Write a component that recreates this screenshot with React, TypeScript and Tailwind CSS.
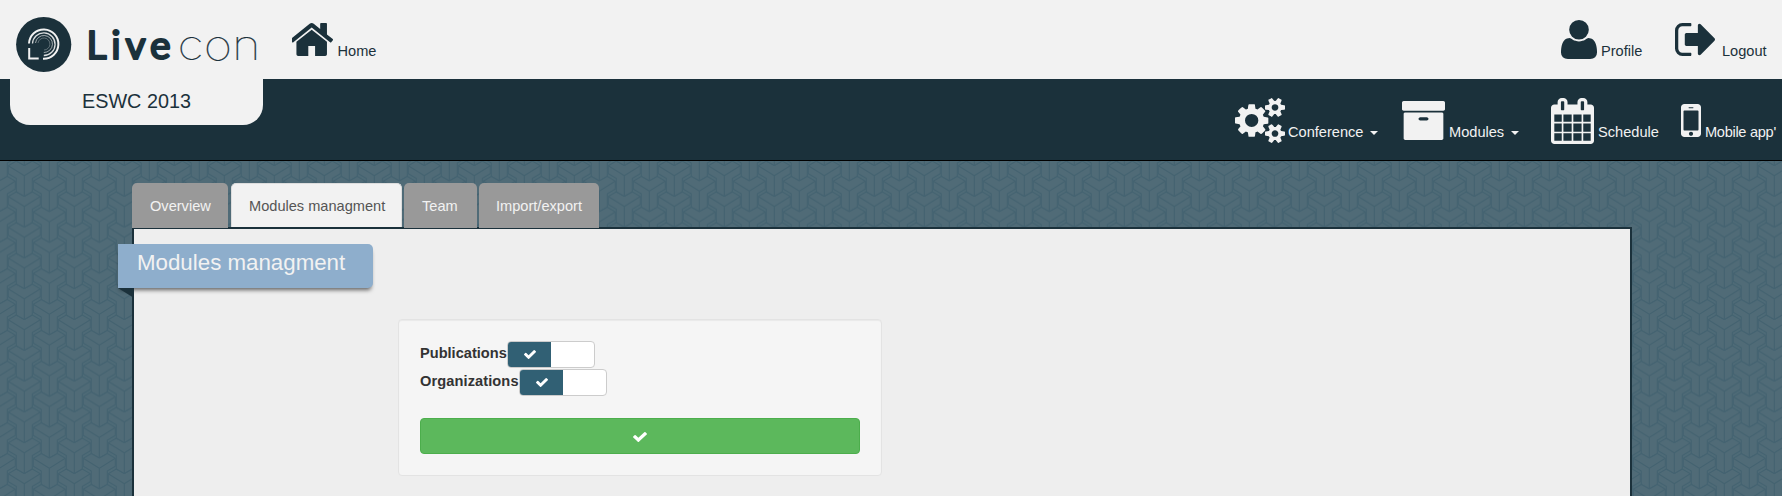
import React from "react";

type IconProps = { box: string; d: string; className: string };

const Icon = ({ box, d, className }: IconProps) => (
  <svg viewBox={box} preserveAspectRatio="none" className={`block shrink-0 fill-current ${className}`}>
    <path d={d} />
  </svg>
);

const HOME =
  "M1408 992v480q0 26-19 45t-45 19h-384v-384h-256v384h-384q-26 0-45-19t-19-45v-480q0-1 .5-3t.5-3l575-474 575 474q1 2 1 6zm223-69l-62 74q-8 9-21 11h-3q-13 0-21-7l-692-577-692 577q-12 8-24 7-13-2-21-11l-62-74q-8-10-7-23.5t11-21.5l719-599q32-26 76-26t76 26l244 204v-195q0-14 9-23t23-9h192q14 0 23 9t9 23v408l219 182q10 8 11 21.5t-7 23.5z";
const USER =
  "M1600 1405q0 120-73 189.5t-194 69.5h-874q-121 0-194-69.5t-73-189.5q0-53 3.5-103.5t14-109 26.5-108.5 43-97.5 62-81 85.5-53.5 111.5-20q9 0 42 21.5t74.5 48 108 48 133.5 21.5 133.5-21.5 108-48 74.5-48 42-21.5q61 0 111.5 20t85.5 53.5 62 81 43 97.5 26.5 108.5 14 109 3.5 103.5zm-320-893q0 159-112.5 271.5t-271.5 112.5-271.5-112.5-112.5-271.5 112.5-271.5 271.5-112.5 271.5 112.5 112.5 271.5z";
const SIGN_OUT =
  "M704 1440q0 4 1 20t.5 26.5-3 23.5-10 19.5-20.5 6.5h-320q-119 0-203.5-84.5t-84.5-203.5v-704q0-119 84.5-203.5t203.5-84.5h320q13 0 22.5 9.5t9.5 22.5q0 4 1 20t.5 26.5-3 23.5-10 19.5-20.5 6.5h-320q-66 0-113 47t-47 113v704q0 66 47 113t113 47h312l11.5 1 11.5 3 8 5.5 7 9 2 13.5zm928-544q0 26-19 45l-544 544q-19 19-45 19t-45-19-19-45v-288h-448q-26 0-45-19t-19-45v-384q0-26 19-45t45-19h448v-288q0-26 19-45t45-19 45 19l544 544q19 19 19 45z";
const SMALL_COG =
  "v140q0 16-149 31-12 27-30 52 51 113 51 138 0 4-4 7-122 71-124 71-8 0-46-47t-52-68q-20 2-30 2t-30-2q-14 21-52 68t-46 47q-2 0-124-71-4-3-4-7 0-25 51-138-18-25-30-52-149-15-149-31v-140q0-16 149-31 13-29 30-52-51-113-51-138 0-4 4-7 4-2 35-20t59-34 30-16q8 0 46 46.5t52 67.5q20-2 30-2t30 2q51-71 92-112l6-2q4 0 124 70 4 3 4 7 0 25-51 138 17 23 30 52 149 15 149 31z";
const COGS =
  "M832 896q0-106-75-181t-181-75-181 75-75 181 75 181 181 75 181-75 75-181zm768 512q0-52-38-90t-90-38-90 38-38 90q0 53 37.5 90.5t90.5 37.5 90.5-37.5 37.5-90.5zm0-1024q0-52-38-90t-90-38-90 38-38 90q0 53 37.5 90.5t90.5 37.5 90.5-37.5 37.5-90.5zm-384 421v185q0 10-7 19.5t-16 10.5l-155 24q-11 35-32 76 34 48 90 115 7 11 7 20 0 12-7 19-23 30-82.5 89.5t-78.5 59.5q-11 0-21-7l-115-90q-37 19-77 31-11 108-23 155-7 24-30 24h-186q-11 0-20-7.5t-10-17.5l-23-153q-34-10-75-31l-118 89q-7 7-20 7-11 0-21-8-144-133-144-160 0-9 7-19 10-14 41-53t47-61q-23-44-35-82l-152-24q-10-1-17-9.5t-7-19.5v-185q0-10 7-19.5t16-10.5l155-24q11-35 32-76-34-48-90-115-7-11-7-20 0-12 7-20 22-30 82-89t79-59q11 0 21 7l115 90q34-18 77-32 11-108 23-154 7-24 30-24h186q11 0 20 7.5t10 17.5l23 153q34 10 75 31l118-89q8-7 20-7 11 0 21 8 144 133 144 160 0 8-7 19-12 16-42 54t-45 60q23 48 34 82l152 23q10 2 17 10.5t7 19.5zM1856 1338" +
  SMALL_COG +
  "M1856 314" +
  SMALL_COG;
const ARCHIVE =
  "M1088 832q0-26-19-45t-45-19h-256q-26 0-45 19t-19 45 19 45 45 19h256q26 0 45-19t19-45zm576-192v960q0 26-19 45t-45 19h-1408q-26 0-45-19t-19-45v-960q0-26 19-45t45-19h1408q26 0 45 19t19 45zm64-448v256q0 26-19 45t-45 19h-1536q-26 0-45-19t-19-45v-256q0-26 19-45t45-19h1536q26 0 45 19t19 45z";
const CALENDAR =
  "M192 1664h288v-288h-288v288zm352 0h320v-288h-320v288zm-352-352h288v-320h-288v320zm352 0h320v-320h-320v320zm-352-384h288v-288h-288v288zm736 736h320v-288h-320v288zm-384-736h320v-288h-320v288zm768 736h288v-288h-288v288zm-384-352h320v-320h-320v320zm-352-864v-288q0-13-9.5-22.5t-22.5-9.5h-64q-13 0-22.5 9.5t-9.5 22.5v288q0 13 9.5 22.5t22.5 9.5h64q13 0 22.5-9.5t9.5-22.5zm736 864h288v-320h-288v320zm-384-384h320v-288h-320v288zm384 0h288v-288h-288v288zm32-480v-288q0-13-9.5-22.5t-22.5-9.5h-64q-13 0-22.5 9.5t-9.5 22.5v288q0 13 9.5 22.5t22.5 9.5h64q13 0 22.5-9.5t9.5-22.5zm384-64v1280q0 52-38 90t-90 38h-1408q-52 0-90-38t-38-90v-1280q0-52 38-90t90-38h128v-96q0-66 47-113t113-47h64q66 0 113 47t47 113v96h384v-96q0-66 47-113t113-47h64q66 0 113 47t47 113v96h128q52 0 90 38t38 90z";
const MOBILE =
  "M976 1408q0-33-23.5-56.5t-56.5-23.5-56.5 23.5-23.5 56.5 23.5 56.5 56.5 23.5 56.5-23.5 23.5-56.5zm208-160v-704q0-13-9.5-22.5t-22.5-9.5h-512q-13 0-22.5 9.5t-9.5 22.5v704q0 13 9.500 22.500t22.500 9.500h512q13 0 22.500-9.500t9.500-22.500zm-192-848q0-16-16-16h-160q-16 0-16 16t16 16h160q16 0 16-16zm288-16v1024q0 52-38 90t-90 38h-512q-52 0-90-38t-38-90v-1024q0-52 38-90t90-38h512q52 0 90 38t38 90z";
const CHECK =
  "M1671 566q0 40-28 68l-724 724-136 136q-28 28-68 28t-68-28l-136-136-362-362q-28-28-28-68t28-68l136-136q28-28 68-28t68 28l294 295 656-657q28-28 68-28t68 28l136 136q28 28 28 68z";

const Logo = () => (
  <svg viewBox="0 0 270 79" className="block h-[79px] w-[270px] shrink-0" fill="none">
    <circle cx="43.700" cy="44.500" r="27.600" fill="#1b313b" />
    <g stroke="#f2f2f2">
      <path d="M29 43.500a14.700 14.700 0 1 1 14 15.300" strokeWidth="2" />
      <path d="M32.500 43.500a11.300 11.300 0 1 1 11.300 12" strokeWidth="1.300" opacity=".9" />
      <path d="M35.500 43a8.500 8.500 0 1 1 8.300 9.500" strokeWidth=".9" opacity=".7" />
      <path d="M38 43a6 6 0 1 1 6 7" strokeWidth=".7" opacity=".45" />
      <path d="M29.200 48v10.600h9.500" strokeWidth="2" />
    </g>
    <g fill="#1b313b" stroke="#1b313b" strokeLinejoin="round">
      <text x="86.500" y="58.800" fontFamily="Lato, sans-serif" fontSize="39" fontWeight="400" textLength="84" strokeWidth="2.200">
        Live
      </text>
      <text
        x="177.500"
        y="59.500"
        fontFamily="Inter, sans-serif"
        fontSize="42"
        fontWeight="100"
        textLength="83"
        lengthAdjust="spacingAndGlyphs"
        strokeWidth=".2"
      >
        con
      </text>
    </g>
  </svg>
);

const PIECES = [
  [24.3, 14.7],
  [24.3, -16.1],
  [24.3, 45.5],
  [-0.7, -0.7],
  [49.3, -0.7],
  [-0.7, 30.1],
  [49.3, 30.1],
];

const Weave = () => (
  <svg className="absolute inset-0 h-full w-full" aria-hidden="true">
    <defs>
      <pattern id="weave" width="50" height="30.8" patternUnits="userSpaceOnUse">
        {PIECES.map(([x, y]) => (
          <g key={`${x},${y}`} transform={`translate(${x} ${y})`} stroke="#436270" strokeWidth="1.100" strokeLinejoin="round">
            <path
              fill="#506b77"
              d="M-16-10l8-4.700 8 4.500 8-4.500 8 4.700v8l-8 4.700V16l-8 4.500-8-4.500V2.700l-8-4.700z"
            />
            <path fill="none" d="M-16-10L0 0l16-10M0 0v20.500" />
          </g>
        ))}
      </pattern>
    </defs>
    <rect width="100%" height="100%" fill="url(#weave)" />
  </svg>
);

const Caret = () => <span className="mt-[33px] ml-[7px] h-1 border-x-4 border-t-4 border-x-transparent border-t-current" />;

const Toggle = ({ label, labelWidth }: { label: string; labelWidth: string }) => (
  <div className="flex h-7 items-start">
    <span className={`pt-0.5 leading-[21px] font-bold ${labelWidth}`}>{label}</span>
    <span className="flex h-[27px] w-[88px] overflow-hidden rounded border border-[#ccc] bg-white">
      <span className="flex w-[43px] items-center justify-center bg-[#316074] text-white">
        <Icon box="121 334 1550 1188" d={CHECK} className="h-[9px] w-3" />
      </span>
    </span>
  </div>
);

export default function App() {
  return (
    <div className="flex h-[496px] w-[1782px] flex-col overflow-hidden bg-[#4f6b77] font-['Liberation_Sans',Arial,sans-serif] text-[14.6px] text-[#333]">
      <header className="flex h-[79px] shrink-0 bg-[#f2f2f2] leading-5 text-[#1b313b]">
        <Logo />
        <a className="flex pl-[22px]">
          <Icon box="89 253 1547 1283" d={HOME} className="mt-[23px] h-[33px] w-[41px]" />
          <span className="mt-[41px] ml-[4.5px]">Home</span>
        </a>
        <a className="ml-auto flex w-[114px]">
          <Icon box="192 128 1408 1536" d={USER} className="mt-5 h-[39px] w-9" />
          <span className="mt-[41px] ml-1">Profile</span>
        </a>
        <a className="flex w-[107px]">
          <Icon box="64 256 1568 1280" d={SIGN_OUT} className="mt-[23px] h-[33px] w-10" />
          <span className="mt-[41px] ml-[7px]">Logout</span>
        </a>
      </header>

      <nav className="flex h-[82px] shrink-0 justify-between border-b border-black bg-[#1b313b] leading-5 text-[#f2f2f2]">
        <div className="ml-[10px] flex h-[46px] w-[253px] justify-center rounded-b-[20px] bg-[#f2f2f2] pt-[10px] text-[19.8px] leading-6 text-[#1b313b]">
          <span>ESWC 2013</span>
        </div>
        <div className="flex pt-[19px]">
          <a className="flex w-[167px]">
            <Icon box="-64 16 1920 1761" d={COGS} className="h-[45px] w-[50px]" />
            <span className="mt-6 ml-[3px]">Conference</span>
            <Caret />
          </a>
          <a className="flex w-[149px]">
            <Icon box="64 128 1664 1536" d={ARCHIVE} className="mt-[3px] h-[39px] w-[43px]" />
            <span className="mt-6 ml-[4px]">Modules</span>
            <Caret />
          </a>
          <a className="flex w-[130px]">
            <Icon box="64 0 1664 1792" d={CALENDAR} className="h-[46px] w-[43px]" />
            <span className="mt-6 ml-[4px]">Schedule</span>
          </a>
          <a className="flex w-[101px]">
            <Icon box="512 256 768 1280" d={MOBILE} className="mt-[6px] h-[33px] w-5" />
            <span className="mt-6 ml-[4px] tracking-[-0.3px] whitespace-nowrap">Mobile app'</span>
          </a>
        </div>
      </nav>

      <main className="relative grow pt-[22px] pl-[132px]">
        <Weave />
        <div className="relative z-10 flex h-[45px] text-[#f2f2f2]">
          <a className="mr-[3px] w-24 rounded-t-[5px] bg-[#999] pl-[18px] leading-[47px]">Overview</a>
          <a className="mr-0.5 h-11 w-[171px] rounded-t-[5px] border border-b-0 border-[#ddd] bg-[#f2f2f2] pl-[17px] leading-[45px] text-[#555]">
            Modules managment
          </a>
          <a className="mr-0.5 w-[73px] rounded-t-[5px] bg-[#999] pl-[18px] leading-[47px]">Team</a>
          <a className="w-[120px] rounded-t-[5px] bg-[#999] pl-[17px] leading-[47px]">Import/export</a>
        </div>
        <section className="relative -mt-px h-[280px] w-[1500px] border-2 border-[#1b313b] bg-[#eee] pt-[15px]">
          <h1 className="relative -ml-4 h-11 w-[255px] rounded-r-[5px] bg-[#8eaecc] pl-[19px] text-[22.3px] leading-[37px] text-[#f2f2f2] shadow-[0px_4px_4px_-2px_rgba(0,0,0,.6)]">
            Modules managment
          </h1>
          <svg className="absolute top-[59px] -left-4 h-[10px] w-4 fill-[#1b313b]" viewBox="0 0 16 10">
            <path d="M0 0h16v10z" />
          </svg>
          <form className="mt-[31px] ml-[264px] h-[157px] w-[484px] rounded border border-[#e3e3e3] bg-[#f5f5f5] px-[21px] pt-[21px] shadow-[inset_0_1px_1px_rgba(0,0,0,.05)]">
            <Toggle label="Publications" labelWidth="w-[87px]" />
            <Toggle label="Organizations" labelWidth="w-[99px] tracking-[0.1px]" />
            <button type="button" className="mt-[21px] flex h-9 w-full items-center justify-center rounded border border-[#4cae4c] bg-[#5cb85c] pt-0.5 text-white">
              <Icon box="121 334 1550 1188" d={CHECK} className="h-[10px] w-[14px]" />
            </button>
          </form>
        </section>
      </main>
    </div>
  );
}
